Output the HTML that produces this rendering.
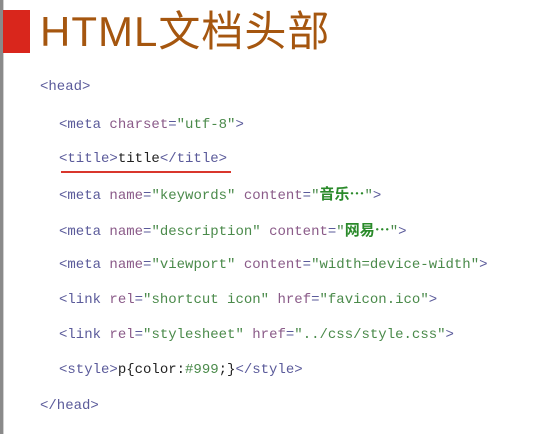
<!DOCTYPE html>
<html><head><meta charset="utf-8">
<style>
html,body{margin:0;padding:0;}
body{width:533px;height:434px;background:#fff;position:relative;overflow:hidden;}
.lb{position:absolute;left:0;top:0;width:3px;height:434px;background:#8a8a8a;}
.lb2{position:absolute;left:3px;top:0;width:1px;height:434px;background:#d0d0d0;}
.red{position:absolute;left:3px;top:10px;width:27px;height:43px;background:#d9261c;}
.title{position:absolute;left:40px;top:7px;font-family:"Liberation Sans","Noto Sans CJK SC",sans-serif;font-size:42px;line-height:50px;color:#a5560f;letter-spacing:1px;}
.l{position:absolute;font-family:"Liberation Mono","Noto Serif CJK SC",monospace;font-size:14px;line-height:18px;white-space:pre;color:#5a5a9a;}
.a{color:#8a5a88;}
.v{color:#4a8a4a;}
.k{color:#222;}
.cn{color:#2a8a2a;font-family:"Noto Sans CJK SC",sans-serif;font-weight:bold;font-size:15px;}
.ul{position:absolute;left:61px;top:171px;width:170px;height:2px;background:#d9362c;}
</style></head><body>
<div class="lb"></div><div class="lb2"></div>
<div class="red"></div>
<div class="title">HTML文档头部</div>
<div class="l" style="left:40px;top:78px">&lt;head&gt;</div>
<div class="l" style="left:59px;top:116px">&lt;meta <span class="a">charset</span>=<span class="v">"utf-8"</span>&gt;</div>
<div class="l" style="left:59px;top:150px">&lt;title&gt;<span class="k">title</span>&lt;/title&gt;</div>
<div class="ul"></div>
<div class="l" style="left:59px;top:185px">&lt;meta <span class="a">name</span>=<span class="v">"keywords"</span> <span class="a">content</span>=<span class="v">"<span class="cn">音乐…</span>"</span>&gt;</div>
<div class="l" style="left:59px;top:221px">&lt;meta <span class="a">name</span>=<span class="v">"description"</span> <span class="a">content</span>=<span class="v">"<span class="cn">网易…</span>"</span>&gt;</div>
<div class="l" style="left:59px;top:256px">&lt;meta <span class="a">name</span>=<span class="v">"viewport"</span> <span class="a">content</span>=<span class="v">"width=device-width"</span>&gt;</div>
<div class="l" style="left:59px;top:291px">&lt;link <span class="a">rel</span>=<span class="v">"shortcut icon"</span> <span class="a">href</span>=<span class="v">"favicon.ico"</span>&gt;</div>
<div class="l" style="left:59px;top:326px">&lt;link <span class="a">rel</span>=<span class="v">"stylesheet"</span> <span class="a">href</span>=<span class="v">"../css/style.css"</span>&gt;</div>
<div class="l" style="left:59px;top:361px">&lt;style&gt;<span class="k">p{color:<span class="v">#999</span>;}</span>&lt;/style&gt;</div>
<div class="l" style="left:40px;top:397px">&lt;/head&gt;</div>
</body></html>
